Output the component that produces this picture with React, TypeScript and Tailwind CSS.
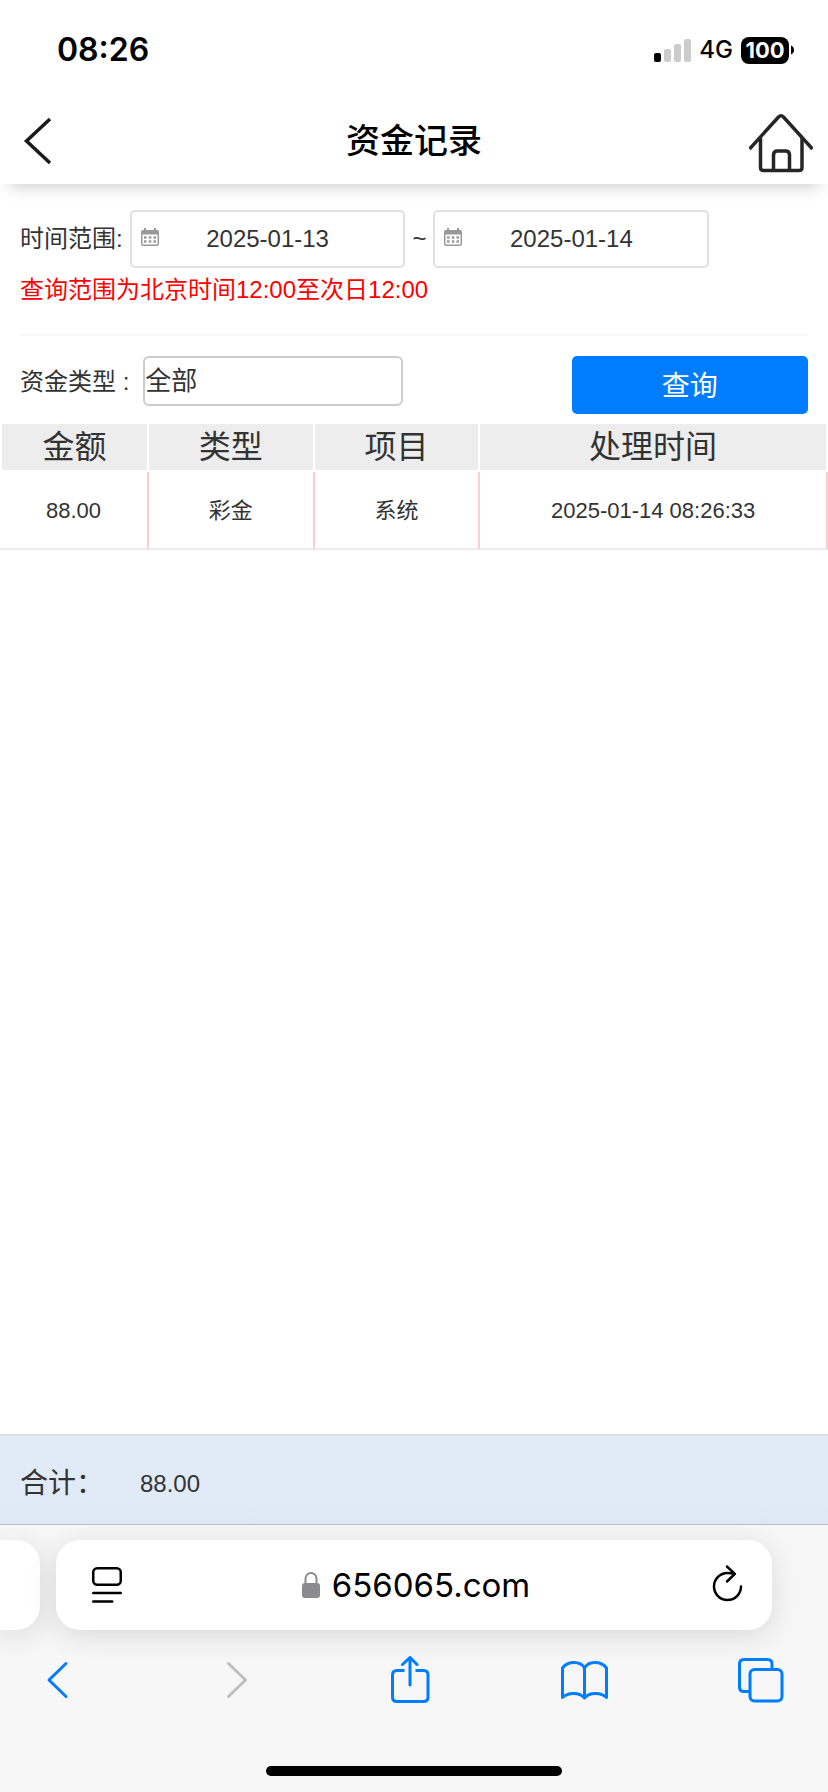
import { useState } from "react";

const records = [
  { amount: "88.00", type: "彩金", item: "系统", time: "2025-01-14 08:26:33" },
];

const StatusBar = () => {
  return (
    <div className="flex h-[98px] items-center justify-between pt-0.5 pl-[57px] pr-[34px] font-['Inter',sans-serif] text-black">
      <span className="text-[32px] leading-9 font-semibold">08:26</span>
      <div className="flex items-center">
        <svg width="37" height="23" viewBox="0 0 37 23" aria-hidden="true">
          <rect x="0" y="14" width="7" height="9" rx="2" fill="#000" />
          <rect x="10" y="10" width="7" height="13" rx="2" fill="#ccc" />
          <rect x="20" y="5" width="7" height="18" rx="2" fill="#ccc" />
          <rect x="30" y="0" width="7" height="23" rx="2" fill="#ccc" />
        </svg>
        <span className="ml-2 text-2xl leading-7 font-medium">4G</span>
        <span className="ml-2 flex h-[27px] w-12 items-center justify-center rounded-lg bg-black text-[22px] leading-7 font-bold text-white">
          100
        </span>
        <svg className="ml-0.5" width="3" height="10" viewBox="0 0 3 10" aria-hidden="true">
          <path d="M0 0.5C2 1.2 3 3 3 5S2 8.800 0 9.500Z" fill="#000" />
        </svg>
      </div>
    </div>
  );
};

const Header = () => {
  return (
    <header className="flex h-[86px] items-center justify-between bg-white px-[15px] shadow-[0_12px_16px_-10px_rgba(0,0,0,0.22)]">
      <button type="button" aria-label="返回" className="flex w-16 justify-start pl-1">
        <svg width="38" height="50" viewBox="0 0 38 50" fill="none" stroke="#1a1a1a" strokeWidth="3.500">
          <path d="M31 3L7.500 25L31 47" />
        </svg>
      </button>
      <h1 className="text-[34px] leading-10 font-medium text-black">资金记录</h1>
      <button type="button" aria-label="首页" className="flex w-16 justify-end pt-1">
        <svg width="64" height="60" viewBox="0 0 64 60" fill="none" stroke="#262626" strokeWidth="3.500">
          <path d="M0.500 36L29.500 4Q32 1.500 34.500 4L63.500 36" />
          <path d="M11.500 25V54.500Q11.500 57.500 14.500 57.500H50Q53 57.500 53 54.500V25" />
          <path d="M24.500 57V42Q24.500 38 28.500 38H36.500Q40.500 38 40.500 42V57" />
        </svg>
      </button>
    </header>
  );
};

type DateFieldProps = {
  id: string;
  label: string;
  value: string;
  onChange: (value: string) => void;
};

const DateField = ({ id, label, value, onChange }: DateFieldProps) => {
  return (
    <div className="relative w-[35%]">
      <svg className="absolute top-[18px] left-[11px]" width="18" height="18" viewBox="0 0 18 18" aria-hidden="true">
        <path
          d="M3 0H5V2H13V0H15V2H16Q18 2 18 4V16Q18 18 16 18H2Q0 18 0 16V4Q0 2 2 2H3Z"
          fill="#999"
        />
        <rect x="1.500" y="6.500" width="15" height="10" fill="#fff" />
        <path
          d="M3 9.500H5.500M7.800 9.500H10.300M12.500 9.500H15M3 13.500H5.500M7.800 13.500H10.300M12.500 13.500H15"
          stroke="#999"
          strokeWidth="2.400"
        />
      </svg>
      <input
        id={id}
        type="text"
        aria-label={label}
        value={value}
        onChange={(e) => onChange(e.target.value)}
        className="h-[58px] w-full rounded-[5px] border-2 border-[#e0e0e0] bg-transparent text-center text-2xl text-[#333] outline-none"
      />
    </div>
  );
};

const Filters = () => {
  const [start, setStart] = useState("2025-01-13");
  const [end, setEnd] = useState("2025-01-14");

  return (
    <form className="px-5 pt-[26px] pb-2.5 text-2xl" onSubmit={(e) => e.preventDefault()}>
      <div className="flex items-center gap-[7px]">
        <label htmlFor="start" className="shrink-0 leading-9">
          时间范围:
        </label>
        <DateField id="start" label="开始日期" value={start} onChange={setStart} />
        <span>~</span>
        <DateField id="end" label="结束日期" value={end} onChange={setEnd} />
      </div>
      <p className="mt-1 leading-9 text-[#f00]">查询范围为北京时间12:00至次日12:00</p>
      <div className="mt-[26px] flex items-start border-t-2 border-[#f7f7f7] pt-5">
        <label htmlFor="type" className="mr-3.5 leading-[52px]">
          资金类型 :
        </label>
        <select
          id="type"
          className="h-[50px] w-[33%] appearance-none rounded-md border-2 border-[#ccc] bg-white text-[26px] text-[#333] outline-none"
        >
          <option>全部</option>
        </select>
        <button
          type="submit"
          className="ml-auto h-[58px] w-[30%] rounded-[5px] bg-[#007dff] pt-1 text-[28px] leading-10 text-white"
        >
          查询
        </button>
      </div>
    </form>
  );
};

const RecordTable = () => {
  return (
    <table className="w-full table-fixed border-separate border-spacing-0 text-center">
      <thead>
        <tr className="h-12 text-[32px] leading-[46px] *:border-r-2 *:border-b-2 *:border-white *:bg-[#ededed] *:p-0 *:font-normal">
          <th className="w-[18%] border-l-2">金额</th>
          <th className="w-[20%]">类型</th>
          <th className="w-[20%]">项目</th>
          <th>处理时间</th>
        </tr>
      </thead>
      <tbody>
        {records.map((record) => (
          <tr
            key={record.time}
            className="h-[78px] text-[22px] leading-8 *:border-r-2 *:border-b-2 *:border-r-[#facfcf] *:border-b-[#ebebeb] *:px-0 *:pt-0.5 *:pb-0"
          >
            <td>{record.amount}</td>
            <td>{record.type}</td>
            <td>{record.item}</td>
            <td>{record.time}</td>
          </tr>
        ))}
      </tbody>
    </table>
  );
};

const AddressBar = () => {
  return (
    <div className="flex h-[90px] gap-4">
      <div className="w-10 rounded-r-3xl bg-white shadow-[0_6px_30px_rgba(0,0,0,0.12)]" />
      <div className="flex flex-1 items-center justify-between rounded-3xl bg-white px-[30px] shadow-[0_6px_30px_rgba(0,0,0,0.12)]">
        <button type="button" aria-label="页面菜单" className="w-11 pl-1.5">
          <svg width="30" height="36" viewBox="0 0 30 36" fill="none" stroke="#000" strokeWidth="2.500" strokeLinecap="round">
            <rect x="1.250" y="1.250" width="27.500" height="16.500" rx="4" />
            <path d="M1.250 26H28.750M1.250 34.500H20.250" />
          </svg>
        </button>
        <div className="flex items-center gap-3">
          <svg width="18" height="26" viewBox="0 0 18 26" aria-hidden="true">
            <path d="M3.500 12V6.500A5.500 5.500 0 0 1 14.500 6.500V12" fill="none" stroke="#8a8a8f" strokeWidth="2" />
            <rect y="11" width="18" height="15" rx="3" fill="#8a8a8f" />
          </svg>
          <span className="font-['Inter',sans-serif] text-[33px] leading-10 text-black">656065.com</span>
        </div>
        <button type="button" aria-label="刷新" className="flex w-10 justify-end">
          <svg className="overflow-visible" width="30" height="38" viewBox="0 0 30 38" fill="none" stroke="#000" strokeWidth="2.500" strokeLinecap="round" strokeLinejoin="round">
            <path d="M29 20.500A13.500 13.500 0 1 1 15.500 7Q19 7 22.500 7.900" />
            <path d="M15 0.500L22.800 7.900L15 15.500" />
          </svg>
        </button>
      </div>
      <div className="w-10" />
    </div>
  );
};

const BrowserBar = () => {
  return (
    <div className="overflow-hidden border-t border-[#babec2] bg-[#f7f7f7] pt-[15px] pb-4">
      <AddressBar />
      <nav className="mt-[26px] flex justify-between pr-[43px] pl-[34px] text-[#007dff]">
        <button type="button" aria-label="后退">
          <svg width="48" height="48" viewBox="0 0 48 48" fill="none" stroke="currentColor" strokeWidth="3" strokeLinecap="round" strokeLinejoin="round">
            <path d="M32 7.500L15 24L32 40.500" />
          </svg>
        </button>
        <button type="button" aria-label="前进" className="text-[#bfbfbf]">
          <svg width="48" height="48" viewBox="0 0 48 48" fill="none" stroke="currentColor" strokeWidth="3" strokeLinecap="round" strokeLinejoin="round">
            <path d="M18.500 7.500L35.500 24L18.500 40.500" />
          </svg>
        </button>
        <button type="button" aria-label="分享">
          <svg width="48" height="48" viewBox="0 0 48 48" fill="none" stroke="currentColor" strokeWidth="3" strokeLinejoin="round">
            <path d="M18.500 14.500H11Q6.500 14.500 6.500 19V41Q6.500 45.500 11 45.500H37.500Q42 45.500 42 41V19Q42 14.500 37.500 14.500H29.500" />
            <path d="M24 29V2M16.500 8.500L24 1.500L31 8.500" strokeLinecap="round" />
          </svg>
        </button>
        <button type="button" aria-label="书签">
          <svg width="48" height="48" viewBox="0 0 48 48" fill="none" stroke="currentColor" strokeWidth="3" strokeLinecap="round" strokeLinejoin="round">
            <path d="M23.500 12C19.500 4.800 7 4.800 1.500 12V41.500C7 36 18.500 36 23.500 42C28.500 36 40 36 45.500 41.500V12C40 4.800 27.500 4.800 23.500 12ZM23.500 12V42" />
          </svg>
        </button>
        <button type="button" aria-label="标签页">
          <svg width="48" height="48" viewBox="0 0 48 48" fill="none" stroke="currentColor" strokeWidth="3" strokeLinejoin="round">
            <path d="M12 35.500H7Q2.500 35.500 2.500 31V8Q2.500 3.500 7 3.500H30.500Q35 3.500 35 8V13" />
            <rect x="13" y="13.500" width="32" height="31.500" rx="4.500" />
          </svg>
        </button>
      </nav>
      <div className="mx-auto mt-[62px] h-2.5 w-[296px] rounded-full bg-black" />
    </div>
  );
};

const App = () => {
  return (
    <div className="flex min-h-screen flex-col bg-white font-['Liberation_Sans','Noto_Sans_CJK_SC',sans-serif] text-[#333]">
      <StatusBar />
      <Header />
      <main className="flex-1">
        <Filters />
        <RecordTable />
      </main>
      <footer className="flex h-[90px] items-center border-t-2 border-[#dedede] bg-linear-to-b from-[#e1ebf7] from-75% to-[#dce8f4] px-5 pt-2 leading-10">
        <span className="w-[120px] text-[28px]">合计：</span>
        <span className="text-2xl leading-10">88.00</span>
      </footer>
      <BrowserBar />
    </div>
  );
};

export default App;
